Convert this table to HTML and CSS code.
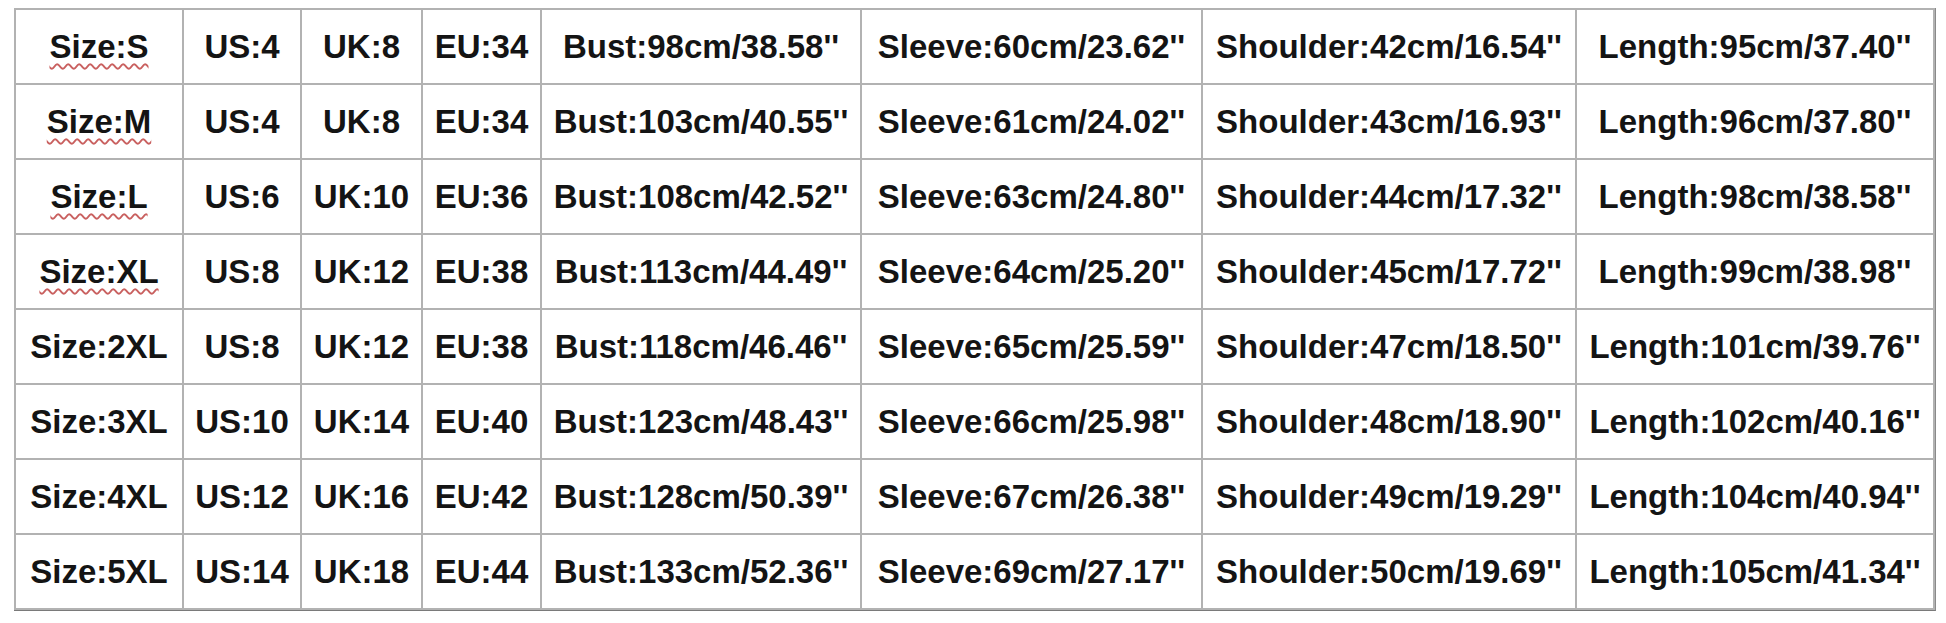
FILE: index.html
```html
<!DOCTYPE html>
<html lang="en">
<head>
<meta charset="utf-8">
<title>Size chart</title>
<link rel="stylesheet" href="styles.css">
</head>
<body>
<div class="page">
<table class="chart">
<colgroup>
<col class="c-size"><col class="c-us"><col class="c-uk"><col class="c-eu"><col class="c-bust"><col class="c-sleeve"><col class="c-shoulder"><col class="c-length">
</colgroup>
<tbody>
<tr><td><span class="spell">Size:S</span></td><td>US:4</td><td>UK:8</td><td>EU:34</td><td>Bust:98cm/38.58''</td><td>Sleeve:60cm/23.62''</td><td>Shoulder:42cm/16.54''</td><td>Length:95cm/37.40''</td></tr>
<tr><td><span class="spell">Size:M</span></td><td>US:4</td><td>UK:8</td><td>EU:34</td><td>Bust:103cm/40.55''</td><td>Sleeve:61cm/24.02''</td><td>Shoulder:43cm/16.93''</td><td>Length:96cm/37.80''</td></tr>
<tr><td><span class="spell">Size:L</span></td><td>US:6</td><td>UK:10</td><td>EU:36</td><td>Bust:108cm/42.52''</td><td>Sleeve:63cm/24.80''</td><td>Shoulder:44cm/17.32''</td><td>Length:98cm/38.58''</td></tr>
<tr><td><span class="spell">Size:XL</span></td><td>US:8</td><td>UK:12</td><td>EU:38</td><td>Bust:113cm/44.49''</td><td>Sleeve:64cm/25.20''</td><td>Shoulder:45cm/17.72''</td><td>Length:99cm/38.98''</td></tr>
<tr><td>Size:2XL</td><td>US:8</td><td>UK:12</td><td>EU:38</td><td>Bust:118cm/46.46''</td><td>Sleeve:65cm/25.59''</td><td>Shoulder:47cm/18.50''</td><td>Length:101cm/39.76''</td></tr>
<tr><td>Size:3XL</td><td>US:10</td><td>UK:14</td><td>EU:40</td><td>Bust:123cm/48.43''</td><td>Sleeve:66cm/25.98''</td><td>Shoulder:48cm/18.90''</td><td>Length:102cm/40.16''</td></tr>
<tr><td>Size:4XL</td><td>US:12</td><td>UK:16</td><td>EU:42</td><td>Bust:128cm/50.39''</td><td>Sleeve:67cm/26.38''</td><td>Shoulder:49cm/19.29''</td><td>Length:104cm/40.94''</td></tr>
<tr><td>Size:5XL</td><td>US:14</td><td>UK:18</td><td>EU:44</td><td>Bust:133cm/52.36''</td><td>Sleeve:69cm/27.17''</td><td>Shoulder:50cm/19.69''</td><td>Length:105cm/41.34''</td></tr>
</tbody>
</table>
</div>
</body>
</html>
```
FILE: styles.css
```css
html, body {
  margin: 0;
  padding: 0;
  background: #ffffff;
}

.page {
  padding: 8px 0 0 14px;
}

.chart {
  table-layout: fixed;
  border-collapse: separate;
  border-spacing: 2px;
  background: #b2b2b2;
  border: 0;
  border-bottom: 1px solid #7a7a7a;
  border-right: 1px solid #8a8a8a;
  width: 1921px;
  font-family: "Liberation Sans", Arial, sans-serif;
  font-weight: bold;
  font-size: 33px;
  color: #141414;
}

.chart td {
  background: #ffffff;
  height: 73px;
  padding: 0;
  text-align: center;
  vertical-align: middle;
  white-space: nowrap;
  overflow: hidden;
  line-height: 1;
}

.c-size { width: 166px; }
.c-us { width: 116px; }
.c-uk { width: 119px; }
.c-eu { width: 117px; }
.c-bust { width: 318px; }
.c-sleeve { width: 339px; }
.c-shoulder { width: 372px; }
.c-length { width: 356px; }

.spell {
  text-decoration: underline wavy #c9605f;
  text-decoration-thickness: 1.5px;
  text-underline-offset: 5px;
}
```
